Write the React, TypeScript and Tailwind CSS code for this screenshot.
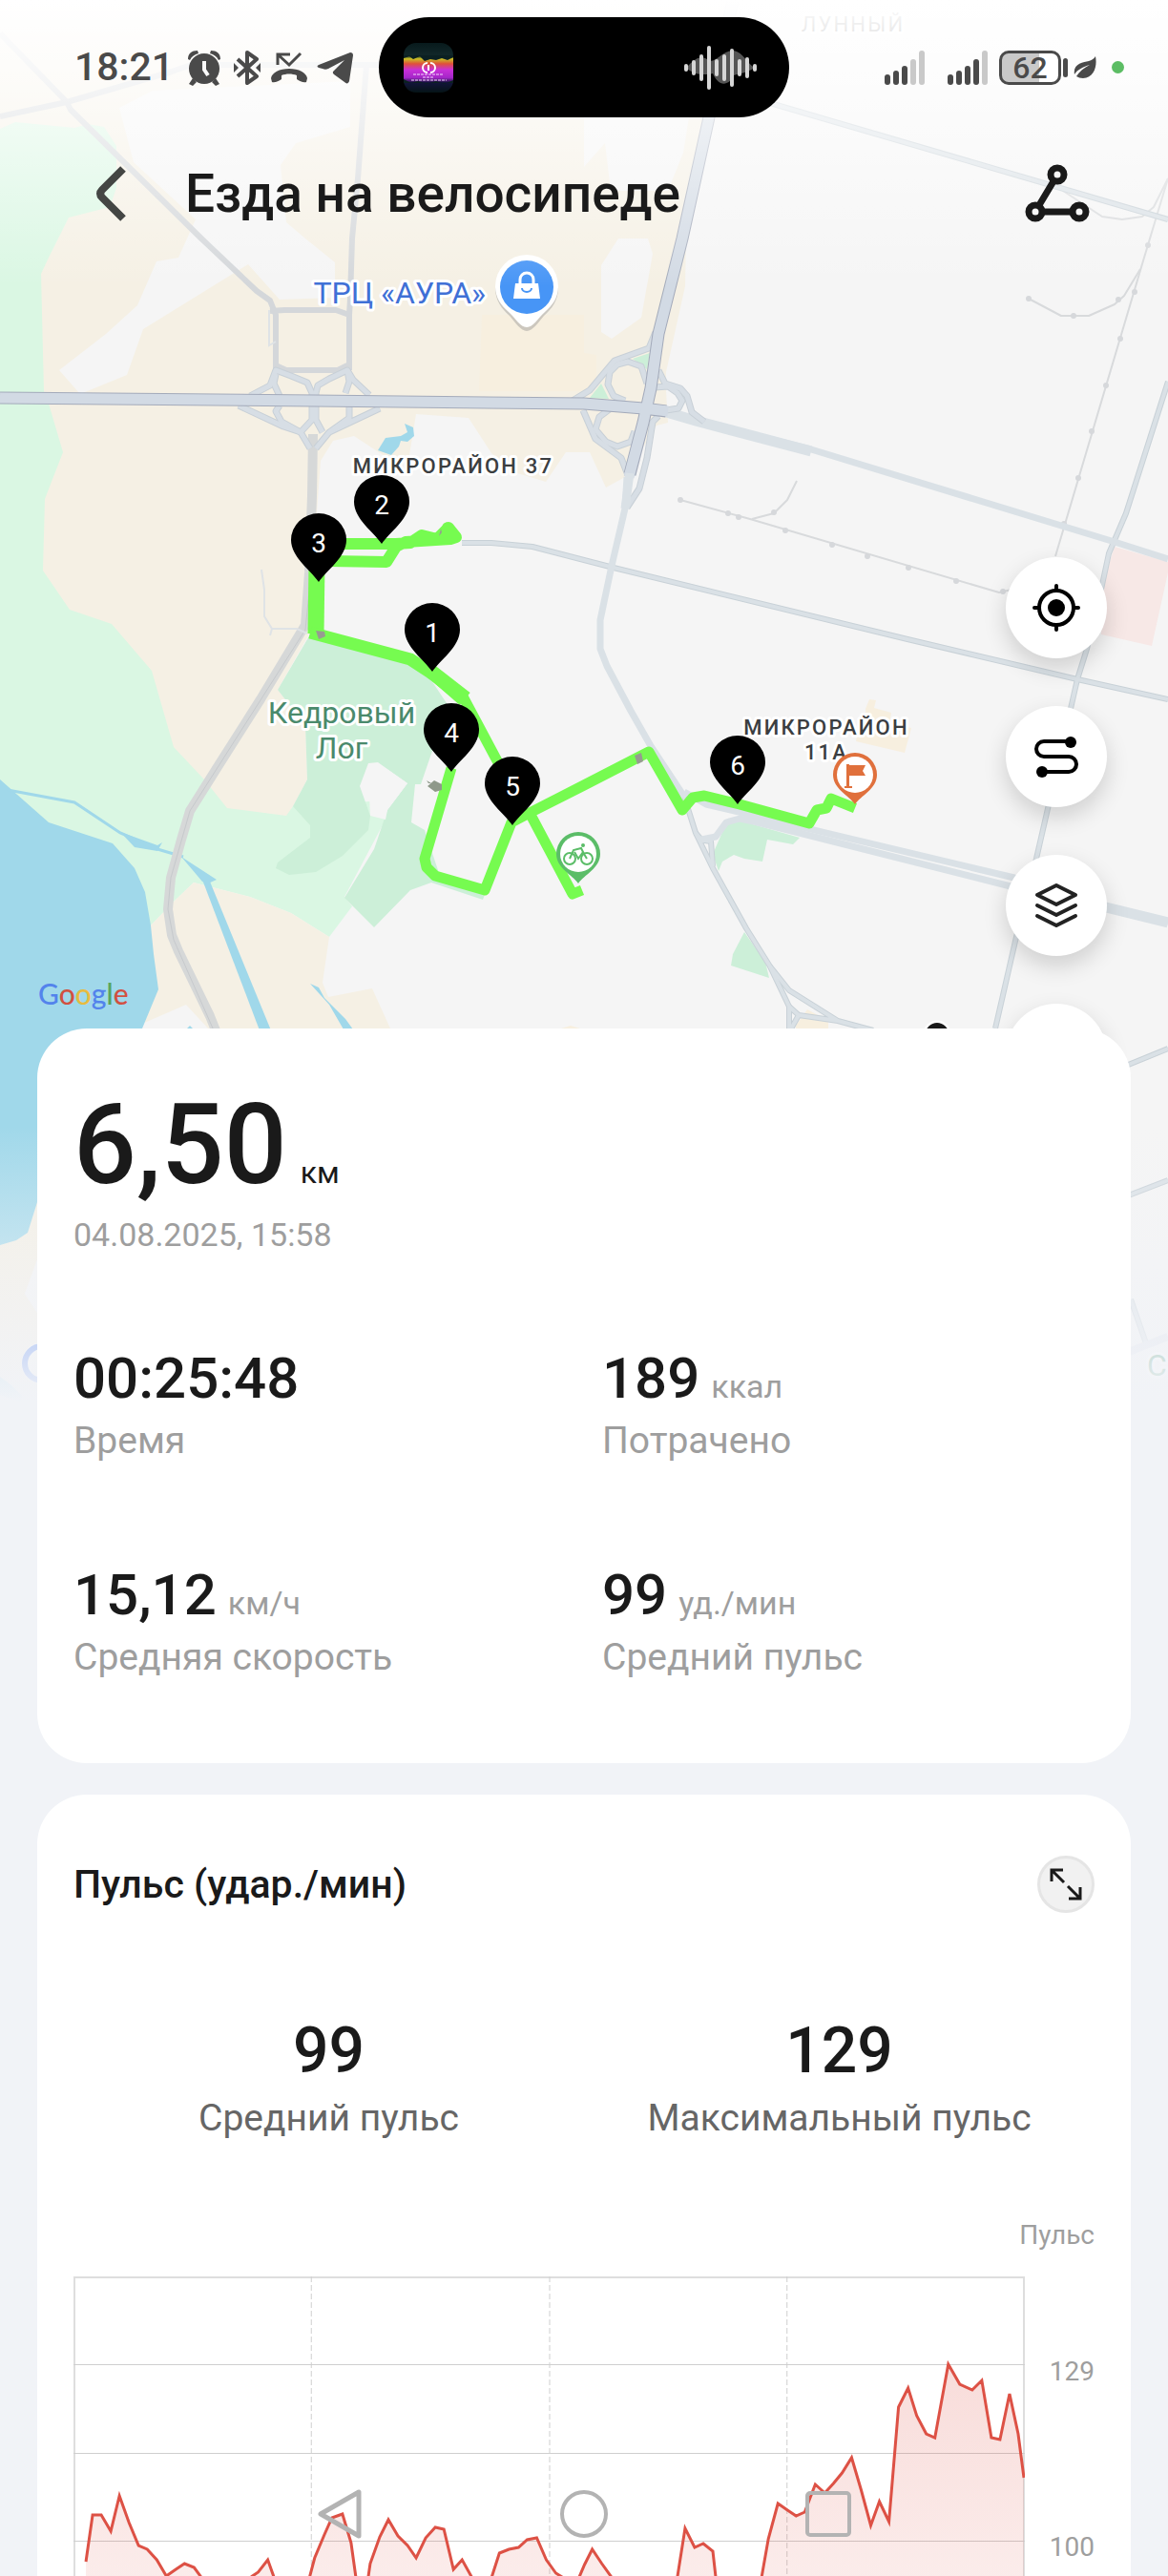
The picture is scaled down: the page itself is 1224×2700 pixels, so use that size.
import React from 'react';

const ROADS = {
  fade: [
    'M0 35L70 107L74 115L211 250L269 305L283 315L289 330V388',
    'M0 122L70 107L180 75L200 68H400',
    'M384 68L375 187L369 250L367 313L366 330V388',
    'M283 326L298 325H352L366 330M289 383L300 388H354L364 383',
  ],
  minor: [
    'M484 569H515L558 573L612 587L643 595L951 670L1129 712L1224 733',
    'M1224 400L1180 538L1162 580L1155 613L1139 680L1129 712L1086 900L1065 982L1043 1078',
    'M717 835L729 873L747 910L782 973L807 1013L827 1055V1085',
    'M807 1013L827 1038L878 1070L915 1080M827 1055L837 1064L878 1070M837 1064L828 1080',
    'M732 880L745 882L747 908M729 873L735 880',
    'M807 108L1224 230',
    'M1180 1117L1224 1099M1180 1254L1224 1237M1185 1362L1201 1408',
  ],
  major: [
    'M657 500L655 533L641 593L629 650V680L636 698L661 745L682 782L717 835',
    'M717 830L740 843L1063 920L1160 950L1224 967',
    'M735 880L750 877L761 862L775 858L790 861L1059 929L1160 954',
    'M695 431L729 441L850 471L1168 568L1224 586',
  ],
  ramps: [
    'M262 415L283 404L289 388L305 394L322 401L327 412V440L315 453',
    'M289 392L287 402L293 415M293 425L289 431L295 442L315 453L325 470',
    'M250 425L297 447L315 453M387 414L370 398L364 388L345 397L333 404L331 412V440L338 453',
    'M364 388L366 400L362 412M366 425V438L345 453L331 470M398 428L345 453',
    'M600 420L618 409L644 378L680 365L687 348',
    'M678 402L672 384L658 379L647 382L639 390L637 403L643 415L655 420',
    'M640 428L628 437L624 450L635 463L647 468L661 463L665 452',
    'M611 430L624 460L651 480L658 498',
    'M690 388L697 402L713 407L720 415L725 432L738 442',
    'M686 406L700 405L710 412L715 420L711 428L698 430',
    'M690 436L684 442L678 480L670 512L657 532',
  ],
  rail: [
    'M1224 187L1199 270L1106 583',
    'M1114 200L1155 227L1176 230L1197 227L1209 217L1224 187',
    'M1078 313L1112 331H1141L1168 319L1178 310L1195 282',
    'M713 524L786 544L1047 621L1060 618',
    'M835 504L825 524L811 538L788 544',
  ],
};

const RAIL_TICKS = [
  [1203, 257], [1189, 306], [1174, 355], [1159, 404], [1144, 452], [1130, 501], [1115, 549],
  [1078, 313], [1125, 331], [1172, 314], [713, 524], [763, 538], [774, 542], [823, 556],
  [872, 571], [909, 583], [952, 595], [1002, 609], [1051, 620], [811, 537],
];

const KM_MARKS = [
  { n: 2, x: 400, y: 570 },
  { n: 3, x: 334, y: 610 },
  { n: 1, x: 453, y: 704 },
  { n: 4, x: 473, y: 809 },
  { n: 5, x: 537, y: 865 },
  { n: 6, x: 773, y: 843 },
];

const STATS = [
  { value: '00:25:48', unit: '', label: 'Время' },
  { value: '189', unit: 'ккал', label: 'Потрачено' },
  { value: '15,12', unit: 'км/ч', label: 'Средняя скорость' },
  { value: '99', unit: 'уд./мин', label: 'Средний пульс' },
];

const PULSE: number[][] = [
  [13, 299], [20, 250], [29, 250], [39, 267], [48, 230], [58, 258], [68, 282], [77, 286], [87, 297],
  [97, 314], [107, 307], [116, 301], [126, 305], [134, 316], [160, 334], [187, 314], [193, 310],
  [203, 297], [209, 314], [217, 354], [240, 354], [247, 314], [252, 295], [262, 271], [270, 253],
  [281, 249], [290, 279], [295, 315], [300, 354], [304, 354], [308, 315], [310, 301], [320, 273],
  [329, 255], [339, 272], [349, 282], [358, 295], [368, 274], [378, 263], [387, 265], [397, 307],
  [406, 297], [416, 315], [427, 334], [437, 315], [445, 290], [455, 286], [465, 284], [474, 276],
  [484, 274], [494, 297], [504, 311], [512, 316], [520, 326], [528, 316], [534, 302], [542, 286],
  [552, 301], [562, 315], [582, 344], [622, 344], [631, 315], [639, 264], [649, 284], [658, 280],
  [668, 288], [671, 315], [677, 354], [712, 354], [719, 315], [726, 275], [736, 238], [746, 245],
  [755, 251], [764, 247], [775, 218], [785, 227], [794, 217], [803, 206], [813, 190], [823, 224],
  [833, 261], [842, 236], [852, 257], [862, 137], [872, 117], [881, 146], [891, 165], [900, 169],
  [914, 92], [926, 113], [939, 119], [949, 109], [959, 169], [968, 171], [978, 123], [987, 165],
  [993, 211],
];

const WAVE = [4, 8, 14, 23, 9, 14, 20, 9, 11, 4];

function Road({ paths, color, width }: { paths: string[]; color: string; width: number }) {
  return (
    <g fill="none" stroke={color} strokeWidth={width} strokeLinejoin="round">
      {paths.map((d) => <path key={d} d={d} />)}
    </g>
  );
}

function Map() {
  return (
    <svg
      viewBox="0 0 1224 1470"
      preserveAspectRatio="xMidYMin slice"
      className="absolute inset-x-0 top-0 w-full h-[1470px]"
      fontFamily="Roboto, sans-serif"
      role="img"
      aria-label="Карта маршрута"
    >
      <defs>
        <linearGradient id="topFade" x1="0" y1="0" x2="0" y2="1">
          <stop offset="0" stopColor="#fff" />
          <stop offset="0.25" stopColor="#fff" stopOpacity="0.8" />
          <stop offset="1" stopColor="#fff" stopOpacity="0" />
        </linearGradient>
        <linearGradient id="bottomFade" x1="0" y1="0" x2="0" y2="1">
          <stop offset="0" stopColor="#f1f3f7" stopOpacity="0" />
          <stop offset="1" stopColor="#f1f3f7" />
        </linearGradient>
      </defs>
      <rect width="1224" height="1470" fill="#f5f5f5" />

      {/* built-up land */}
      <path fill="#f5f0e4" d="M0 0H770L745 123L719 250L718 300L698 390V410L700 443L688 446L655 500L635 511L618 474H593L572 505L539 495L515 475L491 438L436 434L429 477L406 480L371 457L349 462L336 483L332 537L325 663L291 723L320 760L322 817L307 845L300 860H100V660L0 640Z" />
      <path fill="#f7efdf" d="M505 330H612V410H502ZM612 370L625 372V405L612 412Z" />
      <path fill="#f5f5f5" d="M125 113L140 170L205 230L187 270L164 274L144 320L111 350L62 388L84 413L133 393L150 345L260 277L293 314L351 312V275L320 250L300 233L294 173L310 150L367 133V85L160 95Z" />
      <path fill="#f5f5f5" d="M648 250H679L684 266L672 333L641 355L630 348V278ZM612 123H722L716 160L700 200H640L634 150L612 175Z" />

      {/* parks */}
      <path fill="#daf7e3" d="M0 135L16 128L78 134L92 130L109 133L122 153V197L115 217L72 228L51 270L43 287L46 410L51 423L66 474L47 523L45 598L73 639L117 654L159 703L182 783L214 817L238 847L300 855L307 845L388 840L404 859L361 940L369 950L345 982L305 957L262 940L203 925L182 945L158 970H0Z" />
      <path fill="#ccefd8" d="M325 665L291 723L320 760L322 817L307 845L325 865V878L291 904L289 910L303 917L331 914L359 897L386 870L388 855L377 824L386 800L396 799L427 821L406 849L392 890L361 941L392 972L430 933L452 925L506 943L509 935L460 915L445 870L431 862L435 822H441L452 790L470 740L450 710L425 690L340 670Z" />
      <path fill="#f5f5f5" d="M386 813L404 805L427 821L406 849L404 859L388 855Z" />
      <path fill="#ccefd8" d="M663 376L681 370L678 387ZM618 417L630 402L638 418ZM747 895L761 863L775 860L838 878L831 885L804 880L799 903L780 900L769 896L757 903L753 913ZM780 977L768 1000L766 1012L806 1025L802 1008Z" />
      <path fill="#f5f0e4" d="M203 925L262 940L305 957L345 982L338 1030L344 1045L390 1036L409 1078V1100H0V1400L39 1330V1300L150 1078L158 970L182 945Z" />
      <path fill="#f5f0e4" d="M0 1250H39V1320L26 1356L39 1376V1470H0Z" />
      <path fill="#f5f5f5" d="M149 1073L195 1053L220 1080H146ZM39 1320L26 1356L39 1376Z" />
      <path fill="#f7efdf" d="M911 733L918 734L916 742L934 747L932 760L955 763L948 789L897 777L899 767L907 770V743ZM834 1075L846 1058L868 1070V1080H834ZM588 1078L598 1075L608 1078Z" />
      <path fill="#f7e8e6" d="M1168 573L1224 589V600L1207 677L1154 665L1155 613Z" />

      {/* water */}
      <path fill="#a0d8ea" d="M0 817L51 862L118 884L141 910L152 935L158 970L161 1000L166 1037L149 1078L100 1160L39 1260L29 1292L17 1300L0 1305Z" />
      <path fill="#a0d8ea" d="M424 444L433 448L434 457L427 463L420 462L418 468L410 477L396 472L404 459L420 457L427 453ZM126 872L165 886L170 883L165 892L141 888ZM190 898L227 922L218 926L212 924ZM325 1031L334 1035L340 1046L362 1068L370 1079H360L345 1053ZM196 1078L199 1075L202 1078Z" />
      <path fill="none" stroke="#a0d8ea" strokeWidth="3" d="M8 828L78 841L126 873L165 890L192 898" />
      <path fill="#a0d8ea" d="M212 922L220 924L284 1080H272Z" />

      {/* streets */}
      <Road paths={['M328 455L327 520L324 600L320 655L273 733L226 807L199 850L190 880L179 920L176 953L180 980L187 997L220 1065L226 1080']} color="#d6d8d8" width={10} />
      <path fill="none" stroke="#c6c9cc" d="M326 600L320 660L199 850L179 920L176 953L182 985L224 1080" />
      <Road paths={ROADS.fade} color="#d4d7da" width={6} />
      <path fill="none" stroke="#dfe3e6" strokeWidth="2" d="M282 325V362L289 358M274 597L277 618V646L285 659H311L322 664M285 659L283 666" />
      <Road paths={ROADS.rail} color="#d8dadc" width={2} />
      <g fill="#d6d8db">
        {RAIL_TICKS.map(([x, y]) => <circle key={`${x}-${y}`} cx={x} cy={y} r="3" />)}
      </g>
      <Road paths={ROADS.minor} color="#c8d1d7" width={6} />
      <Road paths={ROADS.minor} color="#dae1e6" width={4} />
      <Road paths={ROADS.major} color="#dae1e6" width={7} />
      <path fill="none" stroke="#dae1e6" strokeWidth="11" d="M695 431L729 441L850 473M1155 950L1224 967" />
      <Road paths={['M1180 1418L1224 1401']} color="#dfe3ec" width={8} />
      <Road paths={ROADS.ramps} color="#c8d0d7" width={7} />
      <Road paths={ROADS.ramps} color="#d7dee5" width={5} />
      <Road paths={['M0 417L330 420L612 423L674 428L698 431', 'M768 0L743 123L715 250L690 350L682 407L674 443L660 497']} color="#a3aaba" width={13} />
      <Road paths={['M0 417L330 420L612 423L674 428L700 431', 'M768 0L743 123L715 250L690 350L682 407L674 443L659 500']} color="#d2dae4" width={11} />
      <path stroke="#dae1e6" strokeWidth="9" d="M660 496L655 533" />

      {/* recorded track */}
      <g fill="none" stroke="#76fb50" strokeLinejoin="round">
        <path strokeWidth="12" d="M345 570H415L430 569L442 561L458 565L470 553L478 563L472 565L425 568L415 573L405 589L345 588" />
        <path strokeWidth="9" strokeLinecap="round" d="M440 563H476M468 552L478 561" />
        <path strokeWidth="17" d="M332 590L331 664" />
        <path strokeWidth="13" d="M325 663L430 691L456 708L486 734" />
        <path strokeWidth="15" d="M452 704L488 732" />
        <path strokeWidth="11" d="M484 728L525 805L548 855M473 805L445 900L447 909L456 918L508 933L536 862L555 852L612 823L680 788L715 849L726 836L738 834L775 843L848 863L856 849L866 847L871 837L896 847M555 852L600 937L610 933" />
      </g>
      <path fill="#979b91" d="M331 661L340 662L341 667L334 670ZM462 554L460 562L463 558ZM665 792L672 789L674 798L668 801Z" />
      <path fill="#8f998a" d="M448 824L455 818L463 822V828L456 830ZM449 821L447 818L452 821Z" />

      {/* labels */}
      <g fontSize="22" fontWeight="500" fill="#3b3e41" stroke="#fff" strokeWidth="6" strokeLinejoin="round" paintOrder="stroke" textAnchor="middle" className="tracking-widest">
        <text x="475" y="496">МИКРОРАЙОН 37</text>
        <text x="866" y="770">МИКРОРАЙОН</text>
        <text x="866" y="796">11А</text>
        <text x="894" y="33" fontWeight="400" fill="#111">ЛУННЫЙ</text>
      </g>
      <g fontSize="32" stroke="#fff" strokeWidth="6" strokeLinejoin="round" paintOrder="stroke">
        <text x="509" y="318" textAnchor="end" fill="#3f70d6">ТРЦ «АУРА»</text>
        <g fill="#4a8a6c" textAnchor="middle">
          <text x="358" y="758">Кедровый</text>
          <text x="358" y="795">Лог</text>
        </g>
        <text x="1202" y="1442" fill="#2f8a60">С</text>
      </g>
      <text x="40" y="1053" fontSize="30" fontFamily="Lato, sans-serif" fontWeight="500">
        <tspan fill="#5383ec">G</tspan>
        <tspan fill="#d25041">o</tspan>
        <tspan fill="#e8bb3f">o</tspan>
        <tspan fill="#5383ec">g</tspan>
        <tspan fill="#58a55c">l</tspan>
        <tspan fill="#d25041">e</tspan>
      </text>
      <circle cx="44" cy="1429" r="22" fill="#fff" fillOpacity="0.5" />
      <circle cx="44" cy="1429" r="18" fill="none" stroke="#2f6bf0" strokeWidth="6" />
      <path fill="#a0d8ea" d="M0 1443L12 1452L23 1463L21 1469L0 1462Z" />
      <circle cx="982" cy="1084" r="12" fill="#1a1a1a" stroke="#fff" strokeWidth="5" paintOrder="stroke" />

      {/* shopping mall marker */}
      <g>
        <path fill="#8b8b8b" fillOpacity="0.4" d="M552 347C546 347 540 338 534 331C526 324 519 315 519 302H585C585 315 578 324 570 331C564 338 558 347 552 347Z" />
        <path fill="#fff" d="M552 343C545 343 541 334 533 327C525 320 519 312 519 300A33 33 0 0 1 585 300C585 312 579 320 571 327C563 334 559 343 552 343Z" />
        <circle cx="552" cy="301" r="28" fill="#4795f6" />
        <path fill="#fff" d="M540 297H564L566 313H538Z" />
        <path fill="none" stroke="#fff" strokeWidth="3" d="M545 298V293A7 7 0 0 1 559 293V298" />
        <path fill="none" stroke="#4795f6" strokeWidth="2" d="M547 302A5 4 0 0 0 557 302" />
      </g>

      {/* kilometre marks */}
      {KM_MARKS.map((m) => (
        <g key={m.n} transform={`translate(${m.x} ${m.y})`}>
          <path d="M0 0C-8 -12 -29 -26 -29 -44A29 28 0 0 1 29 -44C29 -26 8 -12 0 0Z" />
          <text y="-31" fontSize="28" fill="#fff" textAnchor="middle">{m.n}</text>
        </g>
      ))}

      {/* start and finish */}
      <g transform="translate(606 926)">
        <path fill="#5bbd68" d="M0 0C-6 -9 -23 -16 -23 -31A23 23 0 0 1 23 -31C23 -16 6 -9 0 0Z" />
        <circle cy="-31" r="19" fill="#fff" />
        <g fill="none" stroke="#5bbd68" strokeWidth="2">
          <circle cx="-9" cy="-26" r="6" />
          <circle cx="9" cy="-26" r="6" />
          <path d="M-9 -26L-5 -35L3 -37L6 -31L9 -26M-4 -33L0 -26L5 -33" />
          <circle cx="5" cy="-40" r="1" fill="#5bbd68" />
        </g>
      </g>
      <g transform="translate(896 843)">
        <path fill="#e0703c" d="M0 0C-6 -9 -23 -16 -23 -31A23 23 0 0 1 23 -31C23 -16 6 -9 0 0Z" />
        <circle cy="-31" r="19" fill="#fff" />
        <path fill="#e0703c" d="M-9 -42H-6V-41H11L8 -35L11 -30H-6V-19H-3V-17H-11V-19H-9Z" />
      </g>

      <rect width="1224" height="300" fill="url(#topFade)" />
      <rect y="1180" width="1224" height="290" fill="url(#bottomFade)" />
    </svg>
  );
}

function Signal({ level }: { level: number }) {
  const bars = [11, 15, 20, 27, 36];
  return (
    <svg width="42" height="36" viewBox="0 0 42 36" aria-hidden="true">
      {bars.map((h, i) => (
        <rect key={h} x={i * 9} y={36 - h} width="6" height={h} rx="3" fill={i < level ? '#4a4a4a' : '#c9c9c9'} />
      ))}
    </svg>
  );
}

function StatusBar() {
  return (
    <div className="grid grid-cols-[1fr_auto_1fr] items-center h-[141px] text-[#4a4a4a]">
      <div className="flex items-center pl-[78px]">
        <span className="text-[41px] leading-none font-medium">18:21</span>
        <svg className="ml-3.5" width="36" height="38" viewBox="0 0 36 38" fill="currentColor" aria-hidden="true">
          <path d="M1 10C1 4 5 1 11 1L12 4C8 5 5 7 3 11ZM35 10C35 4 31 1 25 1L24 4C28 5 31 7 33 11Z" />
          <circle cx="18" cy="20" r="16" />
          <path d="M6 30L10 34L6 38L2 36ZM30 30L26 34L30 38L34 36Z" />
          <path d="M18 12V21L22 27" fill="none" stroke="#fafafa" strokeWidth="4" />
        </svg>
        <svg className="ml-3" width="30" height="38" viewBox="0 0 30 38" fill="none" stroke="currentColor" strokeWidth="4" strokeLinejoin="round" aria-hidden="true">
          <path d="M5 10L25 28L15 35V3L25 10L5 28" />
          <path fill="currentColor" stroke="none" d="M1 14L6 19L1 24ZM29 14L24 19L29 24Z" />
        </svg>
        <svg className="ml-2.5" width="38" height="34" viewBox="0 0 38 34" fill="none" stroke="currentColor" strokeWidth="3" aria-hidden="true">
          <path d="M7 14V3H20M7 3L19 14L31 2" />
          <path fill="currentColor" stroke="none" d="M0 28C1 22 9 18 19 18C29 18 37 22 38 28L37 32C34 33 30 31 27 29V25C22 23 16 23 11 25V29C8 31 4 33 1 32Z" />
        </svg>
        <svg className="ml-2.5" width="38" height="34" viewBox="0 0 38 34" fill="currentColor" aria-hidden="true">
          <path d="M35 1C37 1 38 2 38 4L34 31C33 34 31 34 29 32L18 24C16 22 17 21 18 20L29 9L12 18C10 19 8 19 6 18L2 17C0 16 0 15 2 14Z" />
        </svg>
      </div>

      <div className="flex items-center justify-between w-[430px] h-[105px] rounded-full bg-black pl-[26px] pr-8">
        <svg width="52" height="52" viewBox="0 0 52 52" aria-hidden="true">
          <defs>
            <linearGradient id="cover" x1="0" y1="0" x2="0" y2="1">
              <stop offset="0" stopColor="#081a1c" />
              <stop offset="0.26" stopColor="#12282a" />
              <stop offset="0.32" stopColor="#c9c025" />
              <stop offset="0.42" stopColor="#e0503a" />
              <stop offset="0.54" stopColor="#c92fd8" />
              <stop offset="0.7" stopColor="#a526c9" />
              <stop offset="0.8" stopColor="#12143a" />
              <stop offset="1" stopColor="#051416" />
            </linearGradient>
          </defs>
          <rect width="52" height="52" rx="13" fill="url(#cover)" />
          <path fill="#0b2022" d="M0 13V16L6 14L10 17L17 14L22 19L28 17L34 18L40 16L46 18L52 15V13ZM0 42V38L8 42L15 40L24 43L34 40L43 43L52 39V42Z" />
          <path fill="none" stroke="#fff" strokeWidth="2" d="M25 21A5 5 0 0 0 25 31M28 21A5 5 0 0 1 28 31M26 23V29" />
          <path stroke="#f4d8ff" strokeDasharray="3 1" strokeWidth="1" d="M10 33H42M20 36H32M8 39H45" />
        </svg>
        <svg width="80" height="48" viewBox="0 0 80 48" aria-hidden="true">
          <path fill="#555" d="M4 24C12 16 18 10 26 15C34 22 40 6 54 6C64 8 68 20 76 24C66 30 60 30 54 32C48 44 38 44 32 30C24 32 12 32 4 24Z" />
          {WAVE.map((h, i) => (
            <rect key={i} x={2 + i * 8} y={24 - h} width="4" height={h * 2} rx="2" fill="#d6d6d6" />
          ))}
        </svg>
      </div>

      <div className="flex items-center justify-end pr-[46px]">
        <Signal level={3} />
        <div className="ml-6"><Signal level={4} /></div>
        <div className="ml-3 flex items-center justify-center w-[65px] h-9 rounded-[10px] border-3 border-[#4a4a4a] bg-linear-to-r from-[#c9c9c9] from-66% to-white to-66% text-[32px] leading-none font-medium">
          62
        </div>
        <span className="ml-0.5 w-[5px] h-5 rounded-full bg-[#4a4a4a]" />
        <svg className="ml-1.5" width="24" height="24" viewBox="0 0 24 24" fill="currentColor" aria-hidden="true">
          <path d="M23 0C25 10 22 22 10 23C7 23 5 22 3 21C6 16 11 12 17 9C10 11 4 14 1 19C-1 8 10 6 16 5C19 4 21 3 23 0Z" />
        </svg>
        <span className="ml-4 size-[13px] rounded-full bg-[#5cbd64]" />
      </div>
    </div>
  );
}

function Header() {
  return (
    <header className="flex items-center h-[124px] pl-[92px] pr-[82px]">
      <button type="button" aria-label="Назад" className="w-12 h-16 flex items-center justify-center">
        <svg width="34" height="60" viewBox="0 0 34 60" fill="none" stroke="#444644" strokeWidth="8" strokeLinejoin="round">
          <path d="M30 4L8 26Q4 30 8 34L30 56" />
        </svg>
      </button>
      <h1 className="ml-[54px] text-[55px] leading-none font-medium text-[#1a1a1a]">Езда на велосипеде</h1>
      <button type="button" aria-label="Поделиться" className="ml-auto">
        <svg width="68" height="62" viewBox="0 0 68 62" fill="none" stroke="#1a1a1a" strokeWidth="7">
          <circle cx="34" cy="11" r="7" />
          <circle cx="11" cy="50" r="7" />
          <circle cx="57" cy="50" r="7" />
          <path d="M30 18L15 43M19 50H49" />
        </svg>
      </button>
    </header>
  );
}

function MapButton({ label, children }: { label: string; children?: React.ReactNode }) {
  return (
    <button type="button" aria-label={label} className="flex items-center justify-center size-[106px] rounded-full bg-white shadow-[0_10px_24px_rgba(0,0,0,0.16)]">
      <svg width="52" height="52" viewBox="-26 -26 52 52" fill="none" stroke="#000" strokeWidth="4" strokeLinecap="round" strokeLinejoin="round">
        {children}
      </svg>
    </button>
  );
}

function PulseChart() {
  const line = PULSE.map(([x, y]) => `${x},${y}`).join(' ');
  return (
    <svg viewBox="0 0 994 314" preserveAspectRatio="none" className="flex-1 min-w-0 h-[314px]" role="img" aria-label="График пульса">
      <defs>
        <linearGradient id="pulseFill" gradientUnits="userSpaceOnUse" x1="0" y1="92" x2="0" y2="314">
          <stop offset="0" stopColor="#dd5145" stopOpacity="0.2" />
          <stop offset="1" stopColor="#dd5145" stopOpacity="0.11" />
        </linearGradient>
      </defs>
      <path stroke="#dedede" strokeWidth="2" fill="none" d="M1 314V1H993V314" />
      <path stroke="#cfcfcf" strokeWidth="1" d="M0 92.5H994M0 185.5H994M0 277.5H994" />
      <path stroke="#cfcfcf" strokeWidth="1" strokeDasharray="6 3" d="M248.5 0V314M497.5 0V314M745.5 0V314" />
      <polygon fill="url(#pulseFill)" points={`13,360 ${line} 993,360`} />
      <polyline fill="none" stroke="#dd5145" strokeWidth="3" points={line} />
    </svg>
  );
}

export default function App() {
  return (
    <div className="relative min-h-screen overflow-hidden bg-[#f1f3f7] font-['Roboto',sans-serif] text-[#1a1a1a]">
      <Map />

      <div className="relative h-[1078px]">
        <StatusBar />
        <Header />
        <div className="flex flex-col items-end gap-[50px] mt-[319px] pr-16">
          <MapButton label="Моё местоположение">
            <circle r="18" />
            <circle r="9" fill="#000" stroke="none" />
            <path d="M0 -18V-23M0 18V23M-18 0H-23M18 0H23" />
          </MapButton>
          <MapButton label="Маршрут">
            <path d="M14 -16H-13A8 8 0 0 0 -13 0H13A8 8 0 0 1 13 16H-14" />
            <circle cx="15" cy="-15" r="6" fill="#000" stroke="none" />
            <circle cx="-15" cy="16" r="6" fill="#000" stroke="none" />
          </MapButton>
          <MapButton label="Слои">
            <path stroke="#222" d="M0 -21L20 -11L0 -1L-20 -11ZM-20 0L0 10L20 0M-20 11L0 21L20 11" />
          </MapButton>
          <MapButton label="Ещё" />
        </div>
      </div>

      <main className="relative px-[39px]">
        <section className="rounded-[52px] bg-white pt-16 pb-22 pl-[38px]">
          <p className="flex items-baseline gap-3.5 font-medium">
            <span className="text-[116px] leading-none">6,50</span>
            <span className="text-[32px] leading-none font-normal">км</span>
          </p>
          <p className="mt-4 text-[34px] leading-10 text-[#9e9e9e]">04.08.2025, 15:58</p>
          <dl className="grid grid-cols-2 gap-y-[109px] mt-[101px]">
            {STATS.map((s) => (
              <div key={s.label} className="flex flex-col-reverse gap-3">
                <dt className="text-[39px] leading-[46px] text-[#9e9e9e]">{s.label}</dt>
                <dd className="flex items-baseline gap-3 text-[60px] leading-none font-medium">
                  {s.value}
                  {s.unit && <span className="text-[34px] leading-none font-normal text-[#9e9e9e]">{s.unit}</span>}
                </dd>
              </div>
            ))}
          </dl>
        </section>

        <section className="mt-[33px] rounded-t-[52px] bg-white pt-16 px-[38px]">
          <div className="flex items-center justify-between">
            <h2 className="text-[41px] leading-none font-medium">Пульс (удар./мин)</h2>
            <button type="button" aria-label="Развернуть" className="flex items-center justify-center size-[60px] rounded-full border-3 border-[#e5e5e5] bg-[#f1f1f1]">
              <svg width="34" height="34" viewBox="0 0 34 34" fill="none" stroke="#1a1a1a" strokeWidth="3">
                <path d="M14 2H2V14M2 2L15 15M20 32H32V20M32 32L19 19" />
              </svg>
            </button>
          </div>
          <dl className="grid grid-cols-2 mt-28 text-center">
            <div className="flex flex-col-reverse gap-3.5">
              <dt className="text-[39px] leading-[46px] text-[#666]">Средний пульс</dt>
              <dd className="text-[66px] leading-none font-medium">99</dd>
            </div>
            <div className="flex flex-col-reverse gap-3.5">
              <dt className="text-[39px] leading-[46px] text-[#666]">Максимальный пульс</dt>
              <dd className="text-[66px] leading-none font-medium">129</dd>
            </div>
          </dl>
          <p className="mt-21 text-right text-[28px] leading-8 text-[#9e9e9e]">Пульс</p>
          <div className="flex mt-[27px]">
            <PulseChart />
            <div className="flex flex-col gap-[152px] w-[73px] pt-21 text-right text-[28px] leading-8 text-[#9e9e9e]">
              <span>129</span>
              <span>100</span>
            </div>
          </div>
        </section>
      </main>

      <nav className="fixed inset-x-0 bottom-0 flex items-center justify-center gap-[204px] h-[130px]">
        <button type="button" aria-label="Назад">
          <svg width="52" height="52" viewBox="0 0 52 52" fill="none" stroke="#b3b3b3" strokeWidth="5" strokeLinejoin="round">
            <path d="M46 3V49L6 26Z" />
          </svg>
        </button>
        <button type="button" aria-label="Домой">
          <svg width="52" height="52" viewBox="0 0 52 52" fill="none" stroke="#b3b3b3" strokeWidth="4">
            <circle cx="26" cy="26" r="23" />
          </svg>
        </button>
        <button type="button" aria-label="Недавние">
          <svg width="52" height="52" viewBox="0 0 52 52" fill="none" stroke="#b3b3b3" strokeWidth="4">
            <rect x="4" y="4" width="44" height="44" rx="3" />
          </svg>
        </button>
      </nav>
    </div>
  );
}
